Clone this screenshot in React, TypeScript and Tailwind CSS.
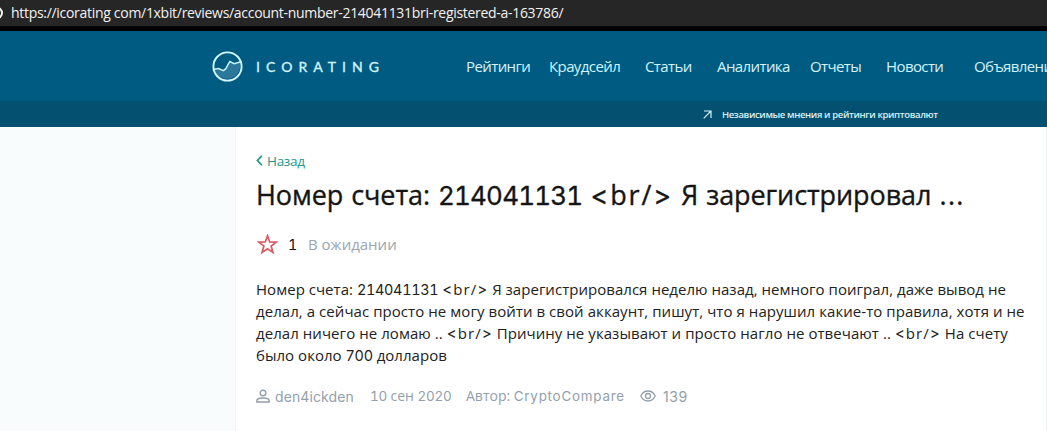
import { ReactNode } from 'react';

const NAV_ITEMS = [
  { label: 'Рейтинги', className: 'w-[83px]' },
  { label: 'Краудсейл', className: 'w-[96px]' },
  { label: 'Статьи', className: 'w-[72px]' },
  { label: 'Аналитика', className: 'w-[93px]' },
  { label: 'Отчеты', className: 'w-[76px]' },
  { label: 'Новости', className: 'w-[88px]' },
  { label: 'Объявления', className: 'w-[90px]' },
];

const REVIEW_LINES = [
  {
    id: 'account',
    className: 'tracking-[0.03px]',
    content: (
      <>
        Номер счета: <Latin>214041131</Latin> <BrTag /> Я зарегистрировался неделю назад, немного поиграл, даже вывод не
      </>
    ),
  },
  {
    id: 'login',
    className: 'tracking-[0.06px]',
    content: 'делал, а сейчас просто не могу войти в свой аккаунт, пишут, что я нарушил какие-то правила, хотя и не',
  },
  {
    id: 'reason',
    className: 'tracking-[0.06px]',
    content: (
      <>
        делал ничего не ломаю .. <BrTag /> Причину не указывают и просто нагло не отвечают .. <BrTag /> На счету
      </>
    ),
  },
  {
    id: 'amount',
    className: 'tracking-[0.03px]',
    content: (
      <>
        было около <Latin>700</Latin> долларов
      </>
    ),
  },
];

function Latin({ children, className = 'tracking-[-0.02em]' }: { children: ReactNode; className?: string }) {
  return <span className={`font-['Inter',sans-serif] text-[0.96em] tabular-nums ${className}`}>{children}</span>;
}

function BrTag() {
  return (
    <span className="tracking-[0.07em]">
      <span className="font-['Inter',sans-serif]">&lt;</span>br/<span className="font-['Inter',sans-serif]">&gt;</span>
    </span>
  );
}

function Logo() {
  return (
    <svg className="h-[31px] w-[31px] shrink-0" viewBox="0 0 31 31" fill="none">
      <path d="M2 18.500l4.500-.6 5 2 2.300-1.900 4-6.700 4.500 1.600 6-1.600c1 8-4 16.500-12.500 16.500C9 27.800 3 24 2 18.500z" fill="#2c789b" />
      <path d="M2 18.200l4.500-.6 5 2 2.300-1.900 4-7.200 4.500 2.100 5.700-1.600" stroke="#c9f2fa" strokeWidth="1.500" />
      <circle cx="15.500" cy="15.500" r="14.100" stroke="#d3f7fb" strokeWidth="1.900" />
    </svg>
  );
}

export default function App() {
  return (
    <div className="h-[431px] w-[1047px] overflow-hidden bg-white font-['Open_Sans','Noto_Sans',sans-serif]">
      {/* Address bar */}
      <div className="flex h-[31px] border-b-[5px] border-black bg-[#262626]">
        <svg className="h-[26px] w-[11px] shrink-0" viewBox="0 0 11 26" fill="none">
          <circle cx="-3.500" cy="13" r="5.500" stroke="#f4f4f4" strokeWidth="2" />
        </svg>
        <span className="text-[14px] leading-[25px] tracking-[-0.3px] whitespace-nowrap text-[#f2f2f2]">
          https://icorating com/1xbit/reviews/account-number-214041131bri-registered-a-163786/
        </span>
      </div>

      {/* Header */}
      <header className="flex h-[70px] items-center bg-[#005b82] pl-[212px] text-[#d3f3fa]">
        <div className="flex w-[254px] shrink-0 items-center gap-[13px]">
          <Logo />
          <span className="mt-px font-['Lato',sans-serif] text-[14px] tracking-[6.05px] [-webkit-text-stroke:0.35px_currentColor]">
            ICORATING
          </span>
        </div>
        <nav className="flex text-[15px] tracking-[-0.6px] whitespace-nowrap">
          {NAV_ITEMS.map((item) => (
            <a key={item.label} className={`shrink-0 ${item.className}`}>
              {item.label}
            </a>
          ))}
        </nav>
      </header>

      {/* Tagline strip */}
      <div className="flex h-[26px] items-center gap-[10px] bg-[#045070] pl-[703px] text-[#d8f1f8]">
        <svg className="h-[9px] w-[9px]" viewBox="0 0 9 9" fill="none" stroke="currentColor" strokeWidth="1.200">
          <path d="M1 1h7v7M8 1L.7 8.300" />
        </svg>
        <span className="pt-[2px] text-[9.5px] font-semibold tracking-[-0.37px] whitespace-nowrap">
          Независимые мнения и рейтинги криптовалют
        </span>
      </div>

      <div className="flex h-[304px]">
        <aside className="w-[235px] shrink-0 bg-[#f9fcfd]" />
        <main className="flex flex-1 flex-col border-x border-[#f0f3f5] pt-[24px] pl-[20px] whitespace-nowrap">
          <a className="flex h-5 items-center gap-[4px] text-[13.5px] text-[#23988a]">
            <svg
              className="mb-px h-[11px] w-[7px]"
              viewBox="0 0 7 11"
              fill="none"
              stroke="currentColor"
              strokeWidth="1.700"
            >
              <path d="M5.800.9L1.400 5.500l4.400 4.600" />
            </svg>
            <span className="tracking-[-0.3px]">Назад</span>
          </a>

          <h1 className="mt-[5px] text-[27px] leading-[38px] tracking-[-0.1px] text-[#151515] [word-spacing:1.2px] [-webkit-text-stroke:0.35px_currentColor]">
            Номер счета: <Latin className="tracking-[-0.03em]">214041131</Latin> <BrTag /> Я зарегистрировал{' '}
            <span className="tracking-[0.05em]">...</span>
          </h1>

          {/* Rating */}
          <div className="mt-[17px] flex h-6 items-center text-[15px]">
            <svg className="mr-[10px] ml-[1px] h-[21px] w-[21px]" viewBox="0 0 21 21" fill="none">
              <path
                d="M10.500 1.800l2.200 6.200 6.600.1-5.200 4 1.900 6.300-5.500-3.700L5 18.400l1.900-6.300-5.200-4L8.300 8z"
                stroke="#d95b63"
                strokeWidth="1.700"
              />
            </svg>
            <span className="w-[20px] text-[#151515]">
              <Latin>1</Latin>
            </span>
            <span className="text-[#9ba5b0]">В ожидании</span>
          </div>

          <div className="mt-[22px] text-[15px] leading-[22px] text-[#222]">
            {REVIEW_LINES.map((line) => (
              <p key={line.id} className={`h-[22px] ${line.className}`}>
                {line.content}
              </p>
            ))}
          </div>

          {/* Review meta */}
          <div className="mt-[20px] flex h-5 items-center text-[14px] text-[#939fac]">
            <svg className="mr-[5px] h-[14px] w-[14px]" viewBox="0 0 14 14" fill="none" stroke="currentColor" strokeWidth="1.400">
              <circle cx="7" cy="4" r="2.800" />
              <path d="M.8 13v-1.300C.8 9.700 4 9 7 9s6.200.7 6.200 2.700V13z" />
            </svg>
            <span className="w-[95px] font-['Inter',sans-serif] tracking-[0.1px]">den4ickden</span>
            <span className="w-[96px]">
              <Latin>10</Latin> сен <Latin>2020</Latin>
            </span>
            <span className="w-[174px]">
              Автор: <Latin className="tracking-[0.055em]">CryptoCompare</Latin>
            </span>
            <svg className="mr-[7px] h-[12px] w-[16px]" viewBox="0 0 16 12" fill="none" stroke="currentColor" strokeWidth="1.300">
              <path d="M.8 6C2.300 2.800 4.900 1 8 1s5.700 1.800 7.200 5c-1.500 3.200-4.100 5-7.200 5S2.300 9.200.8 6z" />
              <circle cx="8" cy="6" r="2.500" />
            </svg>
            <span className="font-['Inter',sans-serif] tracking-[0.6px]">139</span>
          </div>
        </main>
      </div>
    </div>
  );
}
